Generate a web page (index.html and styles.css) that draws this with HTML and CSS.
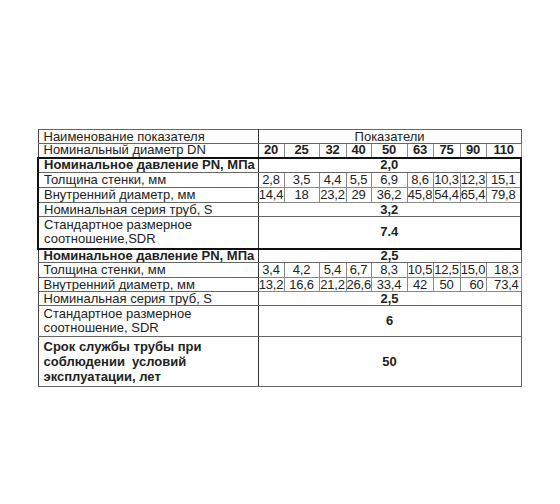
FILE: index.html
```html
<!DOCTYPE html>
<html lang="ru">
<head>
<meta charset="utf-8">
<title>Таблица</title>
<link rel="stylesheet" href="styles.css">
</head>
<body>
<table class="spec">
  <colgroup>
    <col class="w-name">
    <col class="w26"><col class="w35"><col class="w27"><col class="w25"><col class="w36"><col class="w26"><col class="w27"><col class="w26"><col class="w35">
  </colgroup>
  <tr class="h14">
    <td class="name">Наименование показателя</td>
    <td class="val" colspan="9">Показатели</td>
  </tr>
  <tr class="h14">
    <td class="name">Номинальный диаметр DN</td>
    <td class="n b">20</td><td class="n b">25</td><td class="n b">32</td><td class="n b">40</td><td class="n b">50</td><td class="n b">63</td><td class="n b">75</td><td class="n b">90</td><td class="n b">110</td>
  </tr>
  <tr class="h15 blk-top">
    <td class="name b tl">Номинальное давление PN, МПа</td>
    <td class="val b tr" colspan="9">2,0</td>
  </tr>
  <tr class="h15">
    <td class="name tl">Толщина стенки, мм</td>
    <td class="n">2,8</td><td class="n">3,5</td><td class="n">4,4</td><td class="n">5,5</td><td class="n">6,9</td><td class="n">8,6</td><td class="n">10,3</td><td class="n">12,3</td><td class="n tr">15,1</td>
  </tr>
  <tr class="h15">
    <td class="name tl">Внутренний диаметр, мм</td>
    <td class="n">14,4</td><td class="n">18</td><td class="n">23,2</td><td class="n">29</td><td class="n">36,2</td><td class="n">45,8</td><td class="n">54,4</td><td class="n">65,4</td><td class="n tr">79,8</td>
  </tr>
  <tr class="h14">
    <td class="name tl">Номинальная серия труб, S</td>
    <td class="val b tr" colspan="9">3,2</td>
  </tr>
  <tr class="h32 blk-bottom">
    <td class="name tl">Стандартное размерное<br>соотношение,SDR</td>
    <td class="val b tr" colspan="9">7.4</td>
  </tr>
  <tr class="h14">
    <td class="name b">Номинальное давление PN, МПа</td>
    <td class="val b" colspan="9">2,5</td>
  </tr>
  <tr class="h15">
    <td class="name">Толщина стенки, мм</td>
    <td class="n">3,4</td><td class="n">4,2</td><td class="n">5,4</td><td class="n">6,7</td><td class="n">8,3</td><td class="n">10,5</td><td class="n">12,5</td><td class="n">15,0</td><td class="n r">18,3</td>
  </tr>
  <tr class="h14">
    <td class="name">Внутренний диаметр, мм</td>
    <td class="n">13,2</td><td class="n">16,6</td><td class="n">21,2</td><td class="n">26,6</td><td class="n">33,4</td><td class="n">42</td><td class="n">50</td><td class="n r">60</td><td class="n r">73,4</td>
  </tr>
  <tr class="h14">
    <td class="name">Номинальная серия труб, S</td>
    <td class="val b" colspan="9">2,5</td>
  </tr>
  <tr class="h31">
    <td class="name">Стандартное размерное<br>соотношение, SDR</td>
    <td class="val b" colspan="9">6</td>
  </tr>
  <tr class="h50">
    <td class="name b">Срок службы трубы при<br>соблюдении&nbsp; условий<br>эксплуатации, лет</td>
    <td class="val b" colspan="9">50</td>
  </tr>
</table>
</body>
</html>
```

FILE: styles.css
```css
html, body {
  margin: 0;
  padding: 0;
  background: #ffffff;
}

body {
  padding: 129px 0 0 37px;
  font-family: "Liberation Sans", Arial, sans-serif;
  font-size: 13px;
  color: #222222;
}

.spec {
  border-collapse: collapse;
  table-layout: fixed;
  width: 483px;
  border: 1px solid #444444;
}

.w-name { width: 220px; }
.w25 { width: 25px; }
.w26 { width: 26px; }
.w27 { width: 27px; }
.w35 { width: 35px; }
.w36 { width: 36px; }

.spec td {
  padding: 0;
  line-height: 12px;
  border: 1px solid #666666;
  vertical-align: middle;
  white-space: nowrap;
  overflow: hidden;
}

.spec td.name {
  padding-left: 5px;
  text-align: left;
  border-right: 1px solid #333333;
  border-left: 1px solid #444444;
}

.spec td.val {
  text-align: center;
}

.spec td.n {
  text-align: center;
  border-color: #8a8a8a;
  letter-spacing: -0.2px;
}

.spec td.r {
  text-align: right;
  padding-right: 2px;
}

.b { font-weight: bold; }

.h14 { height: 14px; }
.h15 { height: 15px; }
.h31 { height: 31px; }
.h32 { height: 32px; }
.h50 { height: 50px; }

.h31 td.name, .h32 td.name {
  line-height: 14px;
}

.h50 td.name {
  line-height: 15px;
}

.blk-top td {
  border-top: 2px solid #111111;
}

.blk-bottom td {
  border-bottom: 2px solid #111111;
}

.spec td.tl {
  border-left: 2px solid #111111;
}

.spec td.tr {
  border-right: 2px solid #111111;
}
```
